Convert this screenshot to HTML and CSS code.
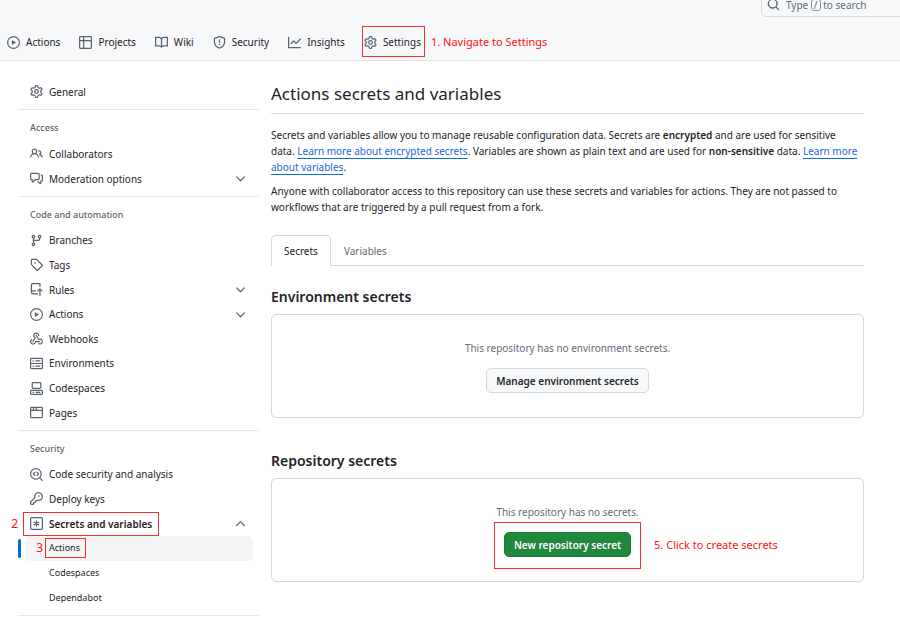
FILE: index.html
```html
<!DOCTYPE html>
<html lang="en">
<head>
<meta charset="utf-8">
<meta name="viewport" content="width=device-width, initial-scale=1">
<title>Actions secrets and variables</title>
<link rel="stylesheet" href="styles.css">
</head>
<body>
<svg class="sprite" aria-hidden="true">
  <symbol id="play" viewBox="0 0 16 16"><path d="M8 0a8 8 0 1 1 0 16A8 8 0 0 1 8 0ZM1.500 8a6.500 6.500 0 1 0 13 0 6.500 6.500 0 0 0-13 0Zm4.879-2.773 4.264 2.559a.25.25 0 0 1 0 .428l-4.264 2.559A.25.25 0 0 1 6 10.559V5.442a.25.25 0 0 1 .379-.215Z"/></symbol>
  <symbol id="table" viewBox="0 0 16 16"><path d="M0 1.750C0 .784.784 0 1.750 0h12.500C15.216 0 16 .784 16 1.750v12.500A1.750 1.750 0 0 1 14.250 16H1.750A1.750 1.750 0 0 1 0 14.250ZM6.500 6.500v8h7.750a.25.25 0 0 0 .25-.25V6.500Zm8-1.500V1.750a.25.25 0 0 0-.25-.25H6.500V5Zm-13 1.500v7.750c0 .138.112.25.25.25H5v-8ZM5 5V1.500H1.750a.25.25 0 0 0-.25.25V5Z"/></symbol>
  <symbol id="book" viewBox="0 0 16 16"><path d="M0 1.750A.75.75 0 0 1 .75 1h4.253c1.227 0 2.317.59 3 1.501A3.743 3.743 0 0 1 11.006 1h4.245a.75.75 0 0 1 .75.75v10.500a.75.75 0 0 1-.75.75h-4.507a2.250 2.250 0 0 0-1.591.659l-.622.621a.75.75 0 0 1-1.060 0l-.622-.621A2.250 2.250 0 0 0 5.258 13H.75a.75.75 0 0 1-.75-.75Zm7.251 10.324.004-5.073-.002-2.253A2.250 2.250 0 0 0 5.003 2.500H1.500v9h3.757a3.750 3.750 0 0 1 1.994.574ZM8.755 4.750l-.004 7.322a3.752 3.752 0 0 1 1.992-.572H14.500v-9h-3.495a2.250 2.250 0 0 0-2.250 2.250Z"/></symbol>
  <symbol id="shield" viewBox="0 0 16 16"><path d="M7.467.133a1.748 1.748 0 0 1 1.066 0l5.250 1.680A1.750 1.750 0 0 1 15 3.480V7c0 1.566-.32 3.182-1.303 4.682-.983 1.498-2.585 2.813-5.032 3.855a1.697 1.697 0 0 1-1.330 0c-2.447-1.042-4.049-2.357-5.032-3.855C1.320 10.182 1 8.566 1 7V3.480a1.750 1.750 0 0 1 1.217-1.667Zm.61 1.429a.25.25 0 0 0-.153 0l-5.250 1.680a.25.25 0 0 0-.174.238V7c0 1.358.275 2.666 1.057 3.860.784 1.194 2.121 2.340 4.366 3.297a.196.196 0 0 0 .154 0c2.245-.956 3.582-2.104 4.366-3.298C13.225 9.666 13.500 8.360 13.500 7V3.480a.251.251 0 0 0-.174-.237l-5.250-1.680ZM8.750 4.750v3a.75.75 0 0 1-1.500 0v-3a.75.75 0 0 1 1.500 0ZM9 10.500a1 1 0 1 1-2 0 1 1 0 0 1 2 0Z"/></symbol>
  <symbol id="graph" viewBox="0 0 16 16"><path d="M1.500 1.750V13.500h13.750a.75.75 0 0 1 0 1.500H.75a.75.75 0 0 1-.75-.75V1.750a.75.75 0 0 1 1.500 0Zm14.280 2.530-5.250 5.250a.75.75 0 0 1-1.060 0L7 7.060 4.280 9.780a.751.751 0 0 1-1.042-.018.751.751 0 0 1-.018-1.042l3.250-3.250a.75.75 0 0 1 1.060 0L10 7.940l4.720-4.720a.751.751 0 0 1 1.042.018.751.751 0 0 1 .018 1.042Z"/></symbol>
  <symbol id="gear" viewBox="0 0 16 16"><path d="M8 0a8.200 8.200 0 0 1 .701.031C9.444.095 9.990.645 10.160 1.290l.288 1.107c.018.066.079.158.212.224.231.114.454.243.668.386.123.082.233.09.299.071l1.103-.303c.644-.176 1.392.021 1.820.63.27.385.506.792.704 1.218.315.675.111 1.422-.364 1.891l-.814.806c-.049.048-.098.147-.088.294.016.257.016.515 0 .772-.01.147.038.246.088.294l.814.806c.475.469.679 1.216.364 1.891a7.977 7.977 0 0 1-.704 1.217c-.428.61-1.176.807-1.820.63l-1.102-.302c-.067-.019-.177-.011-.3.071a5.909 5.909 0 0 1-.668.386c-.133.066-.194.158-.211.224l-.29 1.106c-.168.646-.715 1.196-1.458 1.260a8.006 8.006 0 0 1-1.402 0c-.743-.064-1.289-.614-1.458-1.260l-.289-1.106c-.018-.066-.079-.158-.212-.224a5.738 5.738 0 0 1-.668-.386c-.123-.082-.233-.09-.299-.071l-1.103.303c-.644.176-1.392-.021-1.820-.63a8.120 8.120 0 0 1-.704-1.218c-.315-.675-.111-1.422.363-1.891l.815-.806c.05-.048.098-.147.088-.294a6.214 6.214 0 0 1 0-.772c.01-.147-.038-.246-.088-.294l-.815-.806C.635 6.045.431 5.298.746 4.623a7.920 7.920 0 0 1 .704-1.217c.428-.61 1.176-.807 1.820-.63l1.102.302c.067.019.177.011.3-.071.214-.143.437-.272.668-.386.133-.066.194-.158.211-.224l.29-1.106C6.009.645 6.556.095 7.299.03 7.530.01 7.764 0 8 0Zm-.571 1.525c-.036.003-.108.036-.137.146l-.289 1.105c-.147.561-.549.967-.998 1.189-.173.086-.34.183-.5.29-.417.278-.97.423-1.529.27l-1.103-.303c-.109-.03-.175.016-.195.045-.22.312-.412.644-.573.99-.014.031-.021.11.059.19l.815.806c.411.406.562.957.53 1.456a4.709 4.709 0 0 0 0 .582c.032.499-.119 1.050-.53 1.456l-.815.806c-.081.08-.073.159-.059.19.162.346.353.677.573.989.02.03.085.076.195.046l1.102-.303c.56-.153 1.113-.008 1.530.27.161.107.328.204.501.29.447.222.85.629.997 1.189l.289 1.105c.029.109.101.143.137.146a6.600 6.600 0 0 0 1.142 0c.036-.003.108-.036.137-.146l.289-1.105c.147-.561.549-.967.998-1.189.173-.086.34-.183.5-.29.417-.278.97-.423 1.529-.27l1.103.303c.109.029.175-.016.195-.045.22-.313.411-.644.573-.99.014-.031.021-.11-.059-.19l-.815-.806c-.411-.406-.562-.957-.53-1.456a4.709 4.709 0 0 0 0-.582c-.032-.499.119-1.050.53-1.456l.815-.806c.081-.08.073-.159.059-.19a6.464 6.464 0 0 0-.573-.989c-.02-.03-.085-.076-.195-.046l-1.102.303c-.56.153-1.113.008-1.530-.27a4.440 4.440 0 0 0-.501-.29c-.447-.222-.85-.629-.997-1.189l-.289-1.105c-.029-.11-.101-.143-.137-.146a6.600 6.600 0 0 0-1.142 0ZM11 8a3 3 0 1 1-6 0 3 3 0 0 1 6 0ZM9.500 8a1.500 1.500 0 1 0-3.001.001A1.500 1.500 0 0 0 9.500 8Z"/></symbol>
  <symbol id="search" viewBox="0 0 16 16"><path d="M10.680 11.740a6 6 0 0 1-7.922-8.982 6 6 0 0 1 8.982 7.922l3.040 3.040a.749.749 0 0 1-.326 1.275.749.749 0 0 1-.734-.215ZM11.500 7a4.499 4.499 0 1 0-8.997 0A4.499 4.499 0 0 0 11.500 7Z"/></symbol>
  <symbol id="people" viewBox="0 0 16 16"><path d="M2 5.500a3.500 3.500 0 1 1 5.898 2.549 5.508 5.508 0 0 1 3.034 4.084.75.75 0 1 1-1.482.235 4 4 0 0 0-7.900 0 .75.75 0 0 1-1.482-.236A5.507 5.507 0 0 1 3.102 8.050 3.493 3.493 0 0 1 2 5.500ZM11 4a3.001 3.001 0 0 1 2.220 5.018 5.010 5.010 0 0 1 2.560 3.012.749.749 0 0 1-.885.954.752.752 0 0 1-.549-.514 3.507 3.507 0 0 0-2.522-2.372.75.75 0 0 1-.574-.73v-.352a.75.75 0 0 1 .416-.672A1.500 1.500 0 0 0 11 5.500.75.75 0 0 1 11 4Zm-5.500-.5a2 2 0 1 0-.001 3.999A2 2 0 0 0 5.500 3.500Z"/></symbol>
  <symbol id="discussion" viewBox="0 0 16 16"><path d="M1.750 1h8.500c.966 0 1.750.784 1.750 1.750v5.500A1.750 1.750 0 0 1 10.250 10H7.061l-2.574 2.573A1.458 1.458 0 0 1 2 11.543V10h-.25A1.750 1.750 0 0 1 0 8.250v-5.500C0 1.784.784 1 1.750 1ZM1.500 2.750v5.500c0 .138.112.25.25.25h1a.75.75 0 0 1 .75.75v2.190l2.720-2.720a.749.749 0 0 1 .53-.22h3.500a.25.25 0 0 0 .25-.25v-5.500a.25.25 0 0 0-.25-.25h-8.500a.25.25 0 0 0-.25.25Zm13 2a.25.25 0 0 0-.25-.25h-.5a.75.75 0 0 1 0-1.500h.5c.966 0 1.750.784 1.750 1.750v5.500A1.750 1.750 0 0 1 14.250 12H14v1.543a1.458 1.458 0 0 1-2.487 1.030L9.220 12.280a.749.749 0 0 1 .326-1.275.749.749 0 0 1 .734.215l2.220 2.220v-2.190a.75.75 0 0 1 .75-.75h1a.25.25 0 0 0 .25-.25Z"/></symbol>
  <symbol id="branch" viewBox="0 0 16 16"><path d="M9.500 3.250a2.250 2.250 0 1 1 3 2.122V6A2.500 2.500 0 0 1 10 8.500H6a1 1 0 0 0-1 1v1.128a2.251 2.251 0 1 1-1.500 0V5.372a2.250 2.250 0 1 1 1.500 0v1.836A2.493 2.493 0 0 1 6 7h4a1 1 0 0 0 1-1v-.628A2.250 2.250 0 0 1 9.500 3.250Zm-6 0a.75.75 0 1 0 1.500 0 .75.75 0 0 0-1.500 0Zm8.250-.75a.75.75 0 1 0 0 1.500.75.75 0 0 0 0-1.500ZM4.250 12a.75.75 0 1 0 0 1.500.75.75 0 0 0 0-1.500Z"/></symbol>
  <symbol id="tag" viewBox="0 0 16 16"><path d="M1 7.775V2.750C1 1.784 1.784 1 2.750 1h5.025c.464 0 .91.184 1.238.513l6.250 6.250a1.750 1.750 0 0 1 0 2.474l-5.026 5.026a1.750 1.750 0 0 1-2.474 0l-6.250-6.250A1.752 1.752 0 0 1 1 7.775Zm1.500 0c0 .066.026.13.073.177l6.250 6.250a.25.25 0 0 0 .354 0l5.025-5.025a.25.25 0 0 0 0-.354l-6.250-6.250a.25.25 0 0 0-.177-.073H2.750a.25.25 0 0 0-.25.25ZM6 5a1 1 0 1 1 0 2 1 1 0 0 1 0-2Z"/></symbol>
  <symbol id="rules" viewBox="0 0 16 16"><path d="M1 2.500A2.500 2.500 0 0 1 3.500 0h8.750a.75.75 0 0 1 .75.75v3.500a.75.75 0 0 1-1.500 0V1.500h-8a1 1 0 0 0-1 1v6.708A2.493 2.493 0 0 1 3.500 9h3.250a.75.75 0 0 1 0 1.500H3.500a1 1 0 0 0 0 2h5.750a.75.75 0 0 1 0 1.500H3.500A2.500 2.500 0 0 1 1 11.500Zm13.229 7.790-1.224-1.224v6.184a.75.75 0 0 1-1.500 0V9.066L10.280 10.290a.75.75 0 0 1-1.060-1.061l2.505-2.504a.75.75 0 0 1 1.060 0L15.290 9.230a.751.751 0 0 1-.018 1.042.751.751 0 0 1-1.042.018Z"/></symbol>
  <symbol id="webhook" viewBox="0 0 16 16"><path d="M5.500 4.250a2.250 2.250 0 0 1 4.500 0 .75.75 0 0 0 1.500 0 3.750 3.750 0 1 0-6.140 2.889l-2.272 4.258a.75.75 0 0 0 1.324.706L7 7.250a.75.75 0 0 0-.309-1.015A2.250 2.250 0 0 1 5.500 4.250Z"/><path d="M7.364 3.607a.75.75 0 0 1 1.030.257l2.608 4.349a3.750 3.750 0 1 1-.628 6.785.75.75 0 0 1 .752-1.299 2.250 2.250 0 1 0-.033-3.880.75.75 0 0 1-1.030-.256L7.107 4.636a.75.75 0 0 1 .257-1.030Z"/><path d="M2.900 8.776A.75.75 0 0 1 2.625 9.800 2.250 2.250 0 1 0 6 11.750a.75.75 0 0 1 .75-.751h5.500a.75.75 0 0 1 0 1.500H7.425a3.751 3.751 0 1 1-5.550-3.998.75.75 0 0 1 1.024.274Z"/></symbol>
  <symbol id="server" viewBox="0 0 16 16"><g fill="none" stroke="currentColor" stroke-width="1.5"><rect x=".75" y="1.750" width="14.500" height="6.250" rx="1"/><rect x=".75" y="8" width="14.500" height="6.250" rx="1"/><path stroke-linecap="round" d="M3.750 4.900h.5M7.250 4.900h5M3.750 11.100h.5M7.250 11.100h5"/></g></symbol>
  <symbol id="codespaces" viewBox="0 0 16 16"><path d="M0 11.250c0-.966.784-1.750 1.750-1.750h12.500c.966 0 1.750.784 1.750 1.750v3A1.750 1.750 0 0 1 14.250 16H1.750A1.750 1.750 0 0 1 0 14.250Zm2-9.500C2 .784 2.784 0 3.750 0h8.500C13.216 0 14 .784 14 1.750v5a1.750 1.750 0 0 1-1.750 1.750h-8.500A1.750 1.750 0 0 1 2 6.750Zm1.750-.25a.25.25 0 0 0-.25.25v5c0 .138.112.25.25.25h8.500a.25.25 0 0 0 .25-.25v-5a.25.25 0 0 0-.25-.25Zm-2 9.500a.25.25 0 0 0-.25.25v3c0 .138.112.25.25.25h12.500a.25.25 0 0 0 .25-.25v-3a.25.25 0 0 0-.25-.25Z"/><path d="M7 12.750a.75.75 0 0 1 .75-.75h4.500a.75.75 0 0 1 0 1.500h-4.500a.75.75 0 0 1-.75-.75Zm-4 0a.75.75 0 0 1 .75-.75h.5a.75.75 0 0 1 0 1.500h-.5a.75.75 0 0 1-.75-.75Z"/></symbol>
  <symbol id="browser" viewBox="0 0 16 16"><path d="M0 2.750C0 1.784.784 1 1.750 1h12.500c.966 0 1.750.784 1.750 1.750v10.500A1.750 1.750 0 0 1 14.250 15H1.750A1.750 1.750 0 0 1 0 13.250ZM14.500 6h-13v7.250c0 .138.112.25.25.25h12.500a.25.25 0 0 0 .25-.25Zm-6-3.500v2h6V2.750a.25.25 0 0 0-.25-.25ZM5 2.500v2h2v-2Zm-3.250 0a.25.25 0 0 0-.25.25V4.500h2v-2Z"/></symbol>
  <symbol id="codescan" viewBox="0 0 16 16"><g fill="none" stroke="currentColor" stroke-width="1.500" stroke-linecap="round" stroke-linejoin="round"><circle cx="7.250" cy="7.250" r="6.500"/><path d="m12 12 3.200 3.200M6 5.200 4 7.250l2 2.050M8.600 5.200l2 2.050-2 2.050"/></g></symbol>
  <symbol id="key" viewBox="0 0 16 16"><path d="M10.500 0a5.499 5.499 0 1 1-1.288 10.848l-.932.932a.749.749 0 0 1-.53.22H7v.75a.749.749 0 0 1-.22.53l-.5.5a.749.749 0 0 1-.53.22H5v.75a.749.749 0 0 1-.22.53l-.5.5a.749.749 0 0 1-.53.22h-2A1.750 1.750 0 0 1 0 14.250v-2c0-.199.079-.389.22-.53l4.932-4.932A5.500 5.500 0 0 1 10.500 0Zm-4 5.500c-.001.431.069.86.205 1.269a.75.75 0 0 1-.181.768L1.500 12.560v1.690c0 .138.112.25.25.25h1.690l.06-.06v-1.190a.75.75 0 0 1 .75-.75h1.190l.06-.06v-1.190a.75.75 0 0 1 .75-.75h1.190l1.023-1.025a.75.75 0 0 1 .768-.18A4 4 0 1 0 6.500 5.500ZM11 6a1 1 0 1 1 0-2 1 1 0 0 1 0 2Z"/></symbol>
  <symbol id="asterisk" viewBox="0 0 16 16"><g fill="none" stroke="currentColor" stroke-width="1.500" stroke-linecap="round"><rect x=".75" y=".75" width="14.500" height="14.500" rx="1.500"/><path d="M8 4.800v6.400M5.200 6.400l5.600 3.200M10.800 6.400 5.200 9.600"/></g></symbol>
  <symbol id="down" viewBox="0 0 16 16"><path fill="none" stroke="currentColor" stroke-width="1.500" stroke-linecap="round" stroke-linejoin="round" d="m3.250 6 4.750 4.750L12.750 6"/></symbol>
  <symbol id="up" viewBox="0 0 16 16"><path fill="none" stroke="currentColor" stroke-width="1.500" stroke-linecap="round" stroke-linejoin="round" d="M3.250 10.500 8 5.750l4.750 4.750"/></symbol>
</svg>

<header class="header">
  <div class="topbar">
    <button class="search" type="button"><svg class="icon"><use href="#search"/></svg><span>Type <kbd>/</kbd> to search</span></button>
  </div>
  <nav class="repo-nav" aria-label="Repository">
    <a href="#"><svg class="icon"><use href="#play"/></svg>Actions</a>
    <a href="#"><svg class="icon"><use href="#table"/></svg>Projects</a>
    <a href="#"><svg class="icon"><use href="#book"/></svg>Wiki</a>
    <a href="#"><svg class="icon"><use href="#shield"/></svg>Security</a>
    <a href="#"><svg class="icon"><use href="#graph"/></svg>Insights</a>
    <a href="#" class="mark mark-settings"><svg class="icon"><use href="#gear"/></svg>Settings<span class="note note-right">1. Navigate to Settings</span></a>
  </nav>
</header>

<div class="page">
  <nav class="sidebar" aria-label="Settings">
    <ul class="rows rows-1">
      <li><a class="row" href="#"><svg class="icon"><use href="#gear"/></svg>General</a></li>
    </ul>
    <section class="group">
      <h2 class="group-title">Access</h2>
      <ul class="rows rows-2">
        <li><a class="row" href="#"><svg class="icon"><use href="#people"/></svg>Collaborators</a></li>
        <li><button class="row" type="button"><svg class="icon"><use href="#discussion"/></svg>Moderation options<svg class="icon chevron"><use href="#down"/></svg></button></li>
      </ul>
    </section>
    <section class="group">
      <h2 class="group-title">Code and automation</h2>
      <ul class="rows rows-8">
        <li><a class="row" href="#"><svg class="icon"><use href="#branch"/></svg>Branches</a></li>
        <li><a class="row" href="#"><svg class="icon"><use href="#tag"/></svg>Tags</a></li>
        <li><button class="row" type="button"><svg class="icon"><use href="#rules"/></svg>Rules<svg class="icon chevron"><use href="#down"/></svg></button></li>
        <li><button class="row" type="button"><svg class="icon"><use href="#play"/></svg>Actions<svg class="icon chevron"><use href="#down"/></svg></button></li>
        <li><a class="row" href="#"><svg class="icon"><use href="#webhook"/></svg>Webhooks</a></li>
        <li><a class="row" href="#"><svg class="icon"><use href="#server"/></svg>Environments</a></li>
        <li><a class="row" href="#"><svg class="icon"><use href="#codespaces"/></svg>Codespaces</a></li>
        <li><a class="row" href="#"><svg class="icon"><use href="#browser"/></svg>Pages</a></li>
      </ul>
    </section>
    <section class="group group-last">
      <h2 class="group-title">Security</h2>
      <ul class="rows rows-6">
        <li><a class="row" href="#"><svg class="icon"><use href="#codescan"/></svg>Code security and analysis</a></li>
        <li><a class="row" href="#"><svg class="icon"><use href="#key"/></svg>Deploy keys</a></li>
        <li><button class="row open" type="button" aria-expanded="true"><span class="mark mark-secrets"><svg class="icon"><use href="#asterisk"/></svg>Secrets and variables<span class="note note-left">2</span></span><svg class="icon chevron"><use href="#up"/></svg></button></li>
        <li><a class="row sub current" href="#" aria-current="page"><span class="mark mark-actions">Actions<span class="note note-left">3</span></span></a></li>
        <li><a class="row sub" href="#">Codespaces</a></li>
        <li><a class="row sub" href="#">Dependabot</a></li>
      </ul>
    </section>
  </nav>

  <main class="content">
    <h1>Actions secrets and variables</h1>
    <p>Secrets and variables allow you to manage reusable configuration data. Secrets are <strong>encrypted</strong> and are used for sensitive data. <a href="#">Learn more about encrypted secrets</a>. Variables are shown as plain text and are used for <strong>non-sensitive</strong> data. <a href="#">Learn more about variables</a>.</p>
    <p>Anyone with collaborator access to this repository can use these secrets and variables for actions. They are not passed to workflows that are triggered by a pull request from a fork.</p>
    <div class="tabs" role="tablist">
      <button class="tab selected" type="button" role="tab" aria-selected="true">Secrets</button>
      <button class="tab" type="button" role="tab" aria-selected="false">Variables</button>
    </div>
    <section class="secrets">
      <h2>Environment secrets</h2>
      <div class="box">
        <span>This repository has no environment secrets.</span>
        <button class="btn" type="button">Manage environment secrets</button>
      </div>
    </section>
    <section class="secrets">
      <h2>Repository secrets</h2>
      <div class="box">
        <span>This repository has no secrets.</span>
        <div class="mark mark-new">
          <button class="btn primary" type="button">New repository secret</button>
          <span class="note note-right">5. Click to create secrets</span>
        </div>
      </div>
    </section>
  </main>
</div>
</body>
</html>
```
FILE: styles.css
```css
* { box-sizing: border-box; }

body {
  margin: 0;
  background: #fff;
  color: #1f2328;
  font-family: "Noto Sans", "Open Sans", sans-serif;
  font-size: 10px;
  line-height: 16px;
}

button {
  font: inherit;
  color: inherit;
  background: none;
  border: 0;
  padding: 0;
}

ul { list-style: none; margin: 0; padding: 0; }
h1, h2, p { margin: 0; }
.sprite { display: none; }

.icon {
  flex: none;
  width: 13px;
  height: 13px;
  fill: currentColor;
  color: #59636e;
}

/* Header */
.header {
  background: #f6f8fa;
  border-bottom: 1px solid #dfe3e8;
}

.topbar {
  display: flex;
  justify-content: flex-end;
  height: 24px;
  overflow: hidden;
}

.search {
  display: flex;
  align-items: center;
  gap: 6px;
  width: 151px;
  height: 25px;
  margin: -8px -12px 0 0;
  padding: 0 5px;
  border: 1px solid #d5dae0;
  border-radius: 5px;
  color: #636c76;
  line-height: 10px;
}

.search kbd {
  display: inline-block;
  padding: 0 2px;
  border: 1px solid #8c959f;
  border-radius: 3px;
  font: inherit;
}

.repo-nav {
  display: flex;
  gap: 19px;
  height: 36px;
  padding-left: 7px;
}

.repo-nav a {
  display: flex;
  align-items: center;
  gap: 6px;
  color: inherit;
  text-decoration: none;
  white-space: nowrap;
}

/* Red call-outs */
.mark { position: relative; }

.mark::after {
  content: "";
  position: absolute;
  inset: 2px -4px 3px -2px;
  border: 1px solid #fb2c2c;
}

.mark-secrets::after { inset: -4px -7px -4px -7px; }
.mark-actions::after { inset: -2px -6px -2px -4px; }
.mark-new::after { inset: -10px -10px -12px; }

.note {
  position: absolute;
  top: 50%;
  margin-top: -8px;
  color: #f11;
  font-size: 11px;
  white-space: nowrap;
}

.note-right { left: 100%; margin-left: 10px; }
.note-left { right: 100%; margin-right: 12px; font-size: 12px; font-weight: 400; }
.mark-new .note { margin-left: 23px; }
.mark-actions .note { margin-right: 6px; }

/* Layout */
.page {
  display: grid;
  grid-template-columns: 241px minmax(0, 1fr);
  gap: 12px;
  padding: 18px 36px 6px 18px;
}

/* Sidebar */
.rows { display: grid; grid-auto-rows: 1fr; }
.rows li { display: grid; }
.rows-1 { min-height: 25px; margin-bottom: 5px; }
.rows-2 { min-height: 50px; }
.rows-8 { min-height: 197px; }
.rows-6 { min-height: 148px; }

.group {
  padding: 9px 0 5px;
  border-top: 1px solid #e4e8ec;
}

.group-last { border-bottom: 1px solid #e4e8ec; }

.group-title {
  margin-bottom: 4px;
  padding-left: 12px;
  color: #59636e;
  font-size: 9px;
  font-weight: 500;
  line-height: 18px;
}

.row {
  display: flex;
  align-items: center;
  gap: 6px;
  margin: 0 6px 0 7px;
  padding: 0 6px 0 5px;
  border-radius: 5px;
  color: inherit;
  text-align: left;
  text-decoration: none;
}

.row .mark { display: flex; align-items: center; gap: 6px; }
.chevron { margin-left: auto; }
.open { font-weight: 600; }
.sub { padding-left: 24px; font-size: 9px; }

.current {
  background: #f3f4f6;
  position: relative;
}

.current::before {
  content: "";
  position: absolute;
  left: -7px;
  top: 3px;
  bottom: 3px;
  width: 3px;
  border-radius: 2px;
  background: #0969da;
}

/* Main column */
.content h1 {
  padding: 3px 0 7px;
  margin-bottom: 13px;
  border-bottom: 1px solid #d8dde3;
  font-size: 17px;
  font-weight: 400;
  line-height: 24px;
}

.content p {
  margin-bottom: 8px;
  padding-right: 4px;
}

.content p a {
  color: #1868db;
  text-underline-offset: 3px;
}

.content strong { font-weight: 600; }

.tabs {
  display: flex;
  margin-top: 20px;
  border-bottom: 1px solid #d1d9e0;
}

.tab {
  height: 31px;
  margin-bottom: -1px;
  padding: 0 12px;
  border: 1px solid transparent;
  border-bottom: 0;
  border-radius: 5px 5px 0 0;
  color: #636c76;
}

.tab.selected {
  background: #fff;
  border-color: #d1d9e0;
  color: #1f2328;
}

.secrets { margin-top: 20px; }
.secrets + .secrets { margin-top: 32px; }

.secrets h2 {
  margin-bottom: 6px;
  font-size: 14px;
  font-weight: 600;
  line-height: 22px;
}

.box {
  display: flex;
  flex-direction: column;
  align-items: center;
  gap: 12px;
  padding: 25px 12px 24px;
  border: 1px solid #d1d9e0;
  border-radius: 5px;
  color: #636c76;
}

.btn {
  display: block;
  height: 25px;
  padding: 0 9px;
  background: #f6f8fa;
  border: 1px solid #d1d9e0;
  border-radius: 5px;
  color: #25292e;
  font-weight: 600;
}

.btn.primary {
  background: #1f883d;
  border-color: #1c7c37;
  color: #fff;
}
```
